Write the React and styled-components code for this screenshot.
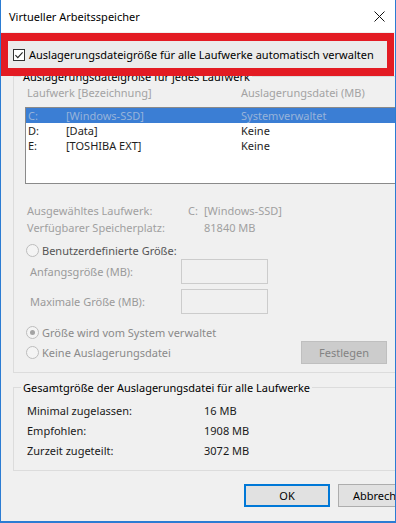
import React from 'react';
import styled, { createGlobalStyle } from 'styled-components';

const GlobalStyle = createGlobalStyle`
    html, body {
        margin: 0;
        padding: 0;
        background: #f0f0f0;
    }
    body {
        font-family: "Noto Sans", "Liberation Sans", sans-serif;
        font-size: 11px;
        color: #000;
    }
`

const Window = styled.div`
    width: 396px;
    height: 523px;
    box-sizing: border-box;
    border: 1px solid #2b7cd3;
    border-top: none;
    border-bottom-width: 2px;
    background: #f0f0f0;
    overflow: hidden;
`

const TitleBar = styled.div`
    height: 32px;
    background: #fff;
    display: flex;
    align-items: center;
    justify-content: space-between;
    padding: 0 10px 0 8px;
`

const Title = styled.span`
    font-size: 11px;
    line-height: 15px;
`

const Highlight = styled.div`
    position: relative;
    z-index: 1;
    margin-top: 1px;
    width: 393px;
    height: 43px;
    box-sizing: border-box;
    border: solid #e31b23;
    border-width: 8px 7px;
    background: #ebebeb;
    display: flex;
    align-items: center;
    gap: 4px;
    padding-left: 5px;
`

const Label = styled.span`
    line-height: 15px;
    white-space: nowrap;
    color: ${props => props.$color || '#000'};
`

const Body = styled.div`
    width: 435px;
    box-sizing: border-box;
    padding: 0 12px;
`

const Group = styled.fieldset`
    margin: ${props => props.$top}px 0 0;
    padding: 0;
    min-width: 0;
    border: 1px solid #dcdcdc;
`

const Legend = styled.legend`
    margin-left: 7px;
    padding: 0 2px;
    line-height: 15px;
    color: ${props => props.$color || '#000'};
`

const Pane = styled.div`
    padding: ${props => props.$pad};
`

const HeaderRow = styled.div`
    display: flex;
    padding-left: 2px;
    line-height: 15px;
    color: #a3a3a3;
`

const Cell = styled.span`
    flex: none;
    width: ${props => props.$w ? `${props.$w}px` : 'auto'};
    white-space: nowrap;
`

const ListBox = styled.div`
    margin-top: 7px;
    width: 388px;
    height: 77px;
    box-sizing: border-box;
    border: 1px solid #8a8a8a;
    background: #fff;
`

const ListRow = styled.div`
    display: flex;
    height: 15px;
    line-height: 15px;
    padding-left: 2px;
    background: ${props => props.$selected ? '#3b7ed4' : 'transparent'};
    color: ${props => props.$selected ? '#97b3da' : '#1e1e1e'};
`

const Info = styled.div`
    margin-top: 18px;
    padding-left: 2px;
    color: #a0a0a0;
`

const InfoRow = styled.div`
    display: flex;
    line-height: 17px;
`

const RadioRow = styled.div`
    display: flex;
    align-items: center;
    gap: 3px;
    height: 17px;
    padding-left: 1px;
    margin-top: ${props => props.$top || 0}px;
`

const Radio = styled.span`
    position: relative;
    flex: none;
    width: 13px;
    height: 13px;
    box-sizing: border-box;
    border-radius: 50%;
    border: 1px solid #bdbdbd;
    background: #f4f4f4;

    &::after {
        content: '';
        display: ${props => props.$checked ? 'block' : 'none'};
        position: absolute;
        left: 3px;
        top: 3px;
        width: 5px;
        height: 5px;
        border-radius: 50%;
        background: #a4a4a4;
    }
`

const FieldRow = styled.div`
    display: flex;
    align-items: center;
    height: 25px;
    padding-left: 5px;
    margin-top: ${props => props.$top || 0}px;
    color: #9a9a9a;
`

const Field = styled.div`
    width: 87px;
    height: 25px;
    box-sizing: border-box;
    border: 1px solid #cccccc;
    background: #f0f0f0;
`

const ActionRow = styled.div`
    display: flex;
    align-items: center;
    justify-content: space-between;
    width: 362px;
    height: 23px;
`

const Button = styled.button`
    width: 86px;
    height: 23px;
    box-sizing: border-box;
    margin: 0;
    padding: 0;
    font-family: inherit;
    font-size: 11px;
    background: ${props => props.$disabled ? '#cccccc' : '#e1e1e1'};
    color: ${props => props.$disabled ? '#838383' : '#000'};
    border: ${props => props.$default ? '2px solid #0078d7' : props.$disabled ? '1px solid #bfbfbf' : '1px solid #adadad'};
`

const TotalRow = styled.div`
    display: flex;
    align-items: center;
    height: 20px;
    color: #1a1a1a;
`

const Footer = styled.div`
    display: flex;
    justify-content: flex-end;
    gap: 8px;
    margin-top: 13px;
`

const CloseIcon = () => (
    <svg width="11" height="11" viewBox="0 0 11 11">
        <path d="M0.5 0.5 L10.5 10.5 M10.5 0.5 L0.5 10.5" stroke="#111" strokeWidth="1" fill="none"/>
    </svg>
)

const CheckBox = () => (
    <svg width="12" height="12" viewBox="0 0 12 12" style={{flex: 'none'}}>
        <rect x="0.5" y="0.5" width="11" height="11" fill="#fff" stroke="#333"/>
        <path d="M2.4 6.2 L4.8 8.6 L9.6 3.4" stroke="#222" strokeWidth="1.1" fill="none"/>
    </svg>
)

const drives = [
    {letter: 'C:', name: '[Windows-SSD]', size: 'Systemverwaltet', selected: true},
    {letter: 'D:', name: '[Data]', size: 'Keine'},
    {letter: 'E:', name: '[TOSHIBA EXT]', size: 'Keine'},
]

const totals = [
    ['Minimal zugelassen:', '16 MB'],
    ['Empfohlen:', '1908 MB'],
    ['Zurzeit zugeteilt:', '3072 MB'],
]

const App = () => {
    return (
        <>
            <GlobalStyle/>
            <Window>
                <TitleBar>
                    <Title>Virtueller Arbeitsspeicher</Title>
                    <CloseIcon/>
                </TitleBar>
                <Highlight>
                    <CheckBox/>
                    <Label>Auslagerungsdateigröße für alle Laufwerke automatisch verwalten</Label>
                </Highlight>
                <Body>
                    <Group $top={-7}>
                        <Legend>Auslagerungsdateigröße für jedes Laufwerk</Legend>
                        <Pane $pad="1px 11px 8px 11px">
                            <HeaderRow>
                                <Cell $w={214}>Laufwerk [Bezeichnung]</Cell>
                                <Cell>Auslagerungsdatei (MB)</Cell>
                            </HeaderRow>
                            <ListBox>
                                {drives.map(d => (
                                    <ListRow key={d.letter} $selected={d.selected}>
                                        <Cell $w={38}>{d.letter}</Cell>
                                        <Cell $w={175}>{d.name}</Cell>
                                        <Cell>{d.size}</Cell>
                                    </ListRow>
                                ))}
                            </ListBox>
                            <Info>
                                <InfoRow>
                                    <Cell $w={161}>Ausgewähltes Laufwerk:</Cell>
                                    <Cell $w={16}>C:</Cell>
                                    <Cell>[Windows-SSD]</Cell>
                                </InfoRow>
                                <InfoRow>
                                    <Cell $w={161}>Verfügbarer Speicherplatz:</Cell>
                                    <Cell $w={16}></Cell>
                                    <Cell>81840 MB</Cell>
                                </InfoRow>
                            </Info>
                            <RadioRow $top={6}>
                                <Radio/>
                                <Label $color="#555">Benutzerdefinierte Größe:</Label>
                            </RadioRow>
                            <FieldRow>
                                <Cell $w={151}>Anfangsgröße (MB):</Cell>
                                <Field/>
                            </FieldRow>
                            <FieldRow $top={5}>
                                <Cell $w={151}>Maximale Größe (MB):</Cell>
                                <Field/>
                            </FieldRow>
                            <RadioRow $top={10}>
                                <Radio $checked/>
                                <Label $color="#8a8a8a">Größe wird vom System verwaltet</Label>
                            </RadioRow>
                            <ActionRow>
                                <RadioRow>
                                    <Radio/>
                                    <Label $color="#8a8a8a">Keine Auslagerungsdatei</Label>
                                </RadioRow>
                                <Button $disabled>Festlegen</Button>
                            </ActionRow>
                        </Pane>
                    </Group>
                    <Group $top={7}>
                        <Legend>Gesamtgröße der Auslagerungsdatei für alle Laufwerke</Legend>
                        <Pane $pad="5px 0 10px 13px">
                            {totals.map(([label, value]) => (
                                <TotalRow key={label}>
                                    <Cell $w={177}>{label}</Cell>
                                    <Cell>{value}</Cell>
                                </TotalRow>
                            ))}
                        </Pane>
                    </Group>
                    <Footer>
                        <Button $default>OK</Button>
                        <Button>Abbrechen</Button>
                    </Footer>
                </Body>
            </Window>
        </>
    )
}

export default App;
